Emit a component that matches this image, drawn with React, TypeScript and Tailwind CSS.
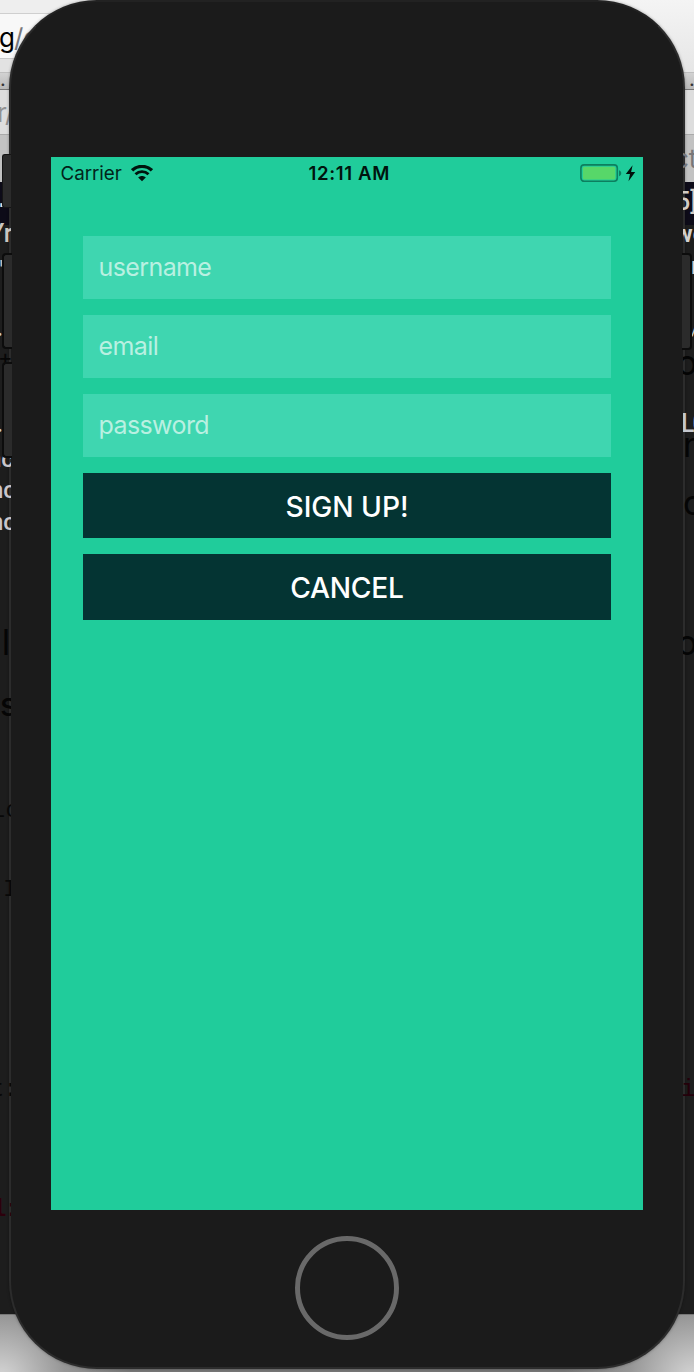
type Fragment = { text: string; className: string };

const toolbarFragments: Fragment[] = [
  { text: "g", className: "left-[-1px] top-[22px] text-[26px] text-black font-['Inter']" },
  { text: "/g", className: "left-[14px] top-[22px] text-[26px] text-[#77777b] font-['Inter']" },
  { text: ".", className: "left-[0px] top-[63px] text-[20px] text-[#333] font-['Inter']" },
  { text: "r/", className: "left-[-3px] top-[97px] text-[26px] tracking-[-0.8px] text-[#929292] font-['Inter']" },
  { text: ".", className: "left-[689px] top-[63px] text-[20px] text-[#333] font-['Inter']" },
];

const leftFragments: Fragment[] = [
  { text: ".", className: "left-[-6px] top-[184px] text-[26px] text-[#ddd] font-['Liberation_Mono']" },
  { text: "Yr", className: "left-[-11px] top-[218px] text-[25px] font-medium text-[#c9c5c0] font-['Roboto']" },
  { text: "'", className: "left-[-2px] top-[253px] text-[23px] text-[#bbb] font-['Inter']" },
  { text: ".", className: "left-[-4px] top-[311px] text-[25px] text-[#ccc] font-['Inter']" },
  { text: "+", className: "left-[-2px] top-[341px] text-[22px] text-[#060606] font-['Inter']" },
  { text: ".", className: "left-[-4px] top-[407px] text-[25px] text-[#ccc] font-['Inter']" },
  { text: "nc", className: "left-[-12px] top-[443px] text-[24px] font-medium text-[#c9c5cb] font-['Roboto']" },
  { text: "nc", className: "left-[-10px] top-[474px] text-[24px] font-medium text-[#c9c5cb] font-['Roboto']" },
  { text: "nc", className: "left-[-10px] top-[506px] text-[24px] font-medium text-[#c9c5cb] font-['Roboto']" },
  { text: "al", className: "left-[-18px] top-[626px] text-[35px] text-[#050505] font-['Inter']" },
  { text: "s", className: "left-[0px] top-[689px] text-[32px] font-medium text-[#050505] font-['Inter']" },
  { text: "Lo", className: "left-[-9px] top-[795px] text-[24px] text-[#080808] font-['Liberation_Mono']" },
  { text: "I", className: "left-[3px] top-[874px] text-[24px] text-[#080808] font-['Liberation_Mono']" },
  { text: "t:", className: "left-[-10px] top-[1074px] text-[24px] tracking-[-1px] text-[#080808] font-['Liberation_Mono']" },
  { text: "l:", className: "left-[-8px] top-[1194px] text-[24px] tracking-[-2px] font-bold text-[#2c000c] font-['Liberation_Mono']" },
];

const rightFragments: Fragment[] = [
  { text: "ct", className: "left-[-9px] top-[143px] text-[26px] text-[#77777a] font-['Inter']" },
  { text: "5]", className: "left-[-7px] top-[186px] text-[25px] font-medium text-[#d2cbc4] font-['Roboto']" },
  { text: "we", className: "left-[-8px] top-[218px] text-[24px] font-bold text-[#d2d0cd] font-['Roboto']" },
  { text: "r", className: "left-[8px] top-[250px] text-[24px] font-medium text-[#d2d0cd] font-['Roboto']" },
  { text: "/", className: "left-[8px] top-[313px] text-[18px] text-[#ccc] font-['Roboto']" },
  { text: "o", className: "left-[-6px] top-[347px] text-[34px] text-[#040404] font-['Inter']" },
  { text: "L0", className: "left-[-2px] top-[408px] text-[25px] tracking-[-2px] font-medium text-[#c5c7ce] font-['Roboto']" },
  { text: "n", className: "left-[0px] top-[429px] text-[34px] text-[#050505] font-['Inter']" },
  { text: "c", className: "left-[0px] top-[487px] text-[34px] text-[#050505] font-['Inter']" },
  { text: "o", className: "left-[-6px] top-[627px] text-[34px] text-[#050505] font-['Inter']" },
  { text: "i", className: "left-[-2px] top-[1074px] text-[24px] text-[#24000a] font-['Liberation_Mono']" },
];

function Fragments({ items }: { items: Fragment[] }) {
  return (
    <>
      {items.map((f, i) => (
        <span key={i} className={`absolute whitespace-pre leading-[32px] ${f.className}`}>
          {f.text}
        </span>
      ))}
    </>
  );
}

function Backdrop() {
  return (
    <div className="absolute inset-0 flex flex-col overflow-hidden" aria-hidden="true">
      <div className="flex h-[73px] border-b border-[#bfbfbf]">
        <div className="flex w-1/2 flex-col">
          <div className="h-[14px] border-b border-[#cfcfcf] bg-[#eeeeee]" />
          <div className="h-[45px] border-b border-[#c8c8c8] bg-[#f8f8f8]" />
          <div className="flex-1 bg-[#e2e2e2]" />
        </div>
        <div className="w-1/2 bg-linear-to-b from-[#f4f4f4] to-[#e6e6e6]" />
      </div>
      <div className="h-[17px] border-b border-[#777] bg-linear-to-b from-[#d2d2d2] to-[#b8b8b8]" />
      <div className="h-[45px] border-b border-[#aaa] bg-[#dddddd]" />
      <div className="h-[47px] bg-[#c2c2c2]" />
      <div className="h-[43px] bg-[#0d0b18]" />
      <div className="h-[1090px] border-b border-[#777] bg-[#1d1d1d]" />
      <div className="flex flex-1">
        <div className="w-1/2 bg-[radial-gradient(circle_at_0_65px,#d8d8d8_0,#969696_65px,#777777_130px)]" />
        <div className="w-1/2 bg-[radial-gradient(circle_at_100%_65px,#d8d8d8_0,#969696_65px,#777777_130px)]" />
      </div>
      <Fragments items={toolbarFragments} />
    </div>
  );
}

function Edges() {
  return (
    <div className="pointer-events-none absolute inset-0" aria-hidden="true">
      <div className="absolute left-0 top-0 h-full w-[11px] overflow-hidden">
        <Fragments items={leftFragments} />
      </div>
      <div className="absolute right-0 top-0 h-full w-[11px] overflow-hidden">
        <Fragments items={rightFragments} />
      </div>
      <div className="absolute left-[2px] top-[154px] h-[54px] w-[9px] rounded-l-[3px] border border-r-0 border-[#151515] bg-[#2b2b2b]" />
      <div className="absolute left-[2px] top-[253px] h-[96px] w-[10px] rounded-l-[4px] border-2 border-r-0 border-[#0c0c0c] bg-[#2b2b2b]" />
      <div className="absolute left-[2px] top-[362px] h-[96px] w-[10px] rounded-l-[4px] border-2 border-r-0 border-[#0c0c0c] bg-[#2b2b2b]" />
      <div className="absolute left-[682px] top-[253px] h-[97px] w-[10px] rounded-r-[4px] border-2 border-l-0 border-[#0c0c0c] bg-[#2b2b2b]" />
    </div>
  );
}

function WifiIcon() {
  return (
    <svg width="22" height="17" viewBox="0 0 22 17" fill="none" stroke="#00140e" className="ml-[9px]">
      <path d="M1.1 5.3C6.6.1 15.4.1 20.9 5.3" strokeWidth="3.3" />
      <path d="M4.5 9.2C8.2 5.7 13.8 5.7 17.5 9.2" strokeWidth="2.9" />
      <path d="M7.2 12.5C9.4 10.5 12.6 10.5 14.8 12.5L11 16.3Z" fill="#00140e" stroke="none" />
    </svg>
  );
}

function BatteryIcon() {
  return (
    <svg width="56" height="20" viewBox="0 0 56 20" fill="none">
      <rect x="0.9" y="1.9" width="36.4" height="16.4" rx="3.2" stroke="#0d7f5f" strokeWidth="1.6" />
      <rect x="2.9" y="3.7" width="32.4" height="12.8" rx="1.5" fill="#57d769" />
      <path d="M39 7.3C42 8 42 12.6 39 13.3Z" fill="#0d7f5f" />
      <path d="M52.6 2.2L45.8 11H50L48.5 18.2L55.2 8.9H51.1Z" fill="#00110c" />
    </svg>
  );
}

function StatusBar() {
  return (
    <div className="grid h-[32px] grid-cols-[1fr_auto_1fr] items-center pl-[9.5px] pr-[7px] text-[18.8px] leading-none text-[#02231a]">
      <div className="flex items-center pt-[1px]">
        <span className="pt-[2px] tracking-[-0.05px]">Carrier</span>
        <WifiIcon />
      </div>
      <span className="translate-x-[1px] text-[18.6px] font-semibold tracking-[0.62px] text-[#00140e]">12:11 AM</span>
      <div className="flex justify-end">
        <BatteryIcon />
      </div>
    </div>
  );
}

function Field({ label, type = "text" }: { label: string; type?: string }) {
  return (
    <input
      type={type}
      placeholder={label}
      className="block h-[63px] w-full rounded-none bg-[#3fd6b0] px-[15.5px] pb-[2px] text-[25px] tracking-[-0.6px] text-white outline-none placeholder:text-[#b9f0e1] placeholder:opacity-100"
    />
  );
}

function ActionButton({ children, className }: { children: string; className: string }) {
  return (
    <button className={`block w-full bg-[#043433] pt-[3px] text-center font-medium text-white ${className}`}>
      {children}
    </button>
  );
}

export default function App() {
  return (
    <div className="relative flex h-[1372px] w-[694px] justify-center overflow-hidden bg-[#1d1d1d] font-['Inter',sans-serif]">
      <Backdrop />
      <main className="relative flex h-[1369px] w-[676px] flex-col items-center rounded-[88px] border-2 border-[#2c2c2c] border-t-[#222222] bg-[#1b1b1b] pt-[155px] shadow-[0_0_3px_rgba(0,0,0,0.35)]">
        <section className="h-[1053px] w-[592px] shrink-0 bg-[#20cc9b]">
          <StatusBar />
          <form className="flex flex-col gap-[16px] px-[32px] pt-[47px]" onSubmit={(e) => e.preventDefault()}>
            <Field label="username" />
            <Field label="email" type="email" />
            <Field label="password" type="password" />
            <ActionButton className="h-[65px] text-[28.2px] tracking-[-0.05px]">SIGN UP!</ActionButton>
            <ActionButton className="h-[66px] text-[28.2px] tracking-[-0.25px]">CANCEL</ActionButton>
          </form>
        </section>
        <button aria-label="Home" className="mt-[26px] size-[104px] shrink-0 rounded-full border-[5px] border-[#696969]" />
      </main>
      <Edges />
    </div>
  );
}
